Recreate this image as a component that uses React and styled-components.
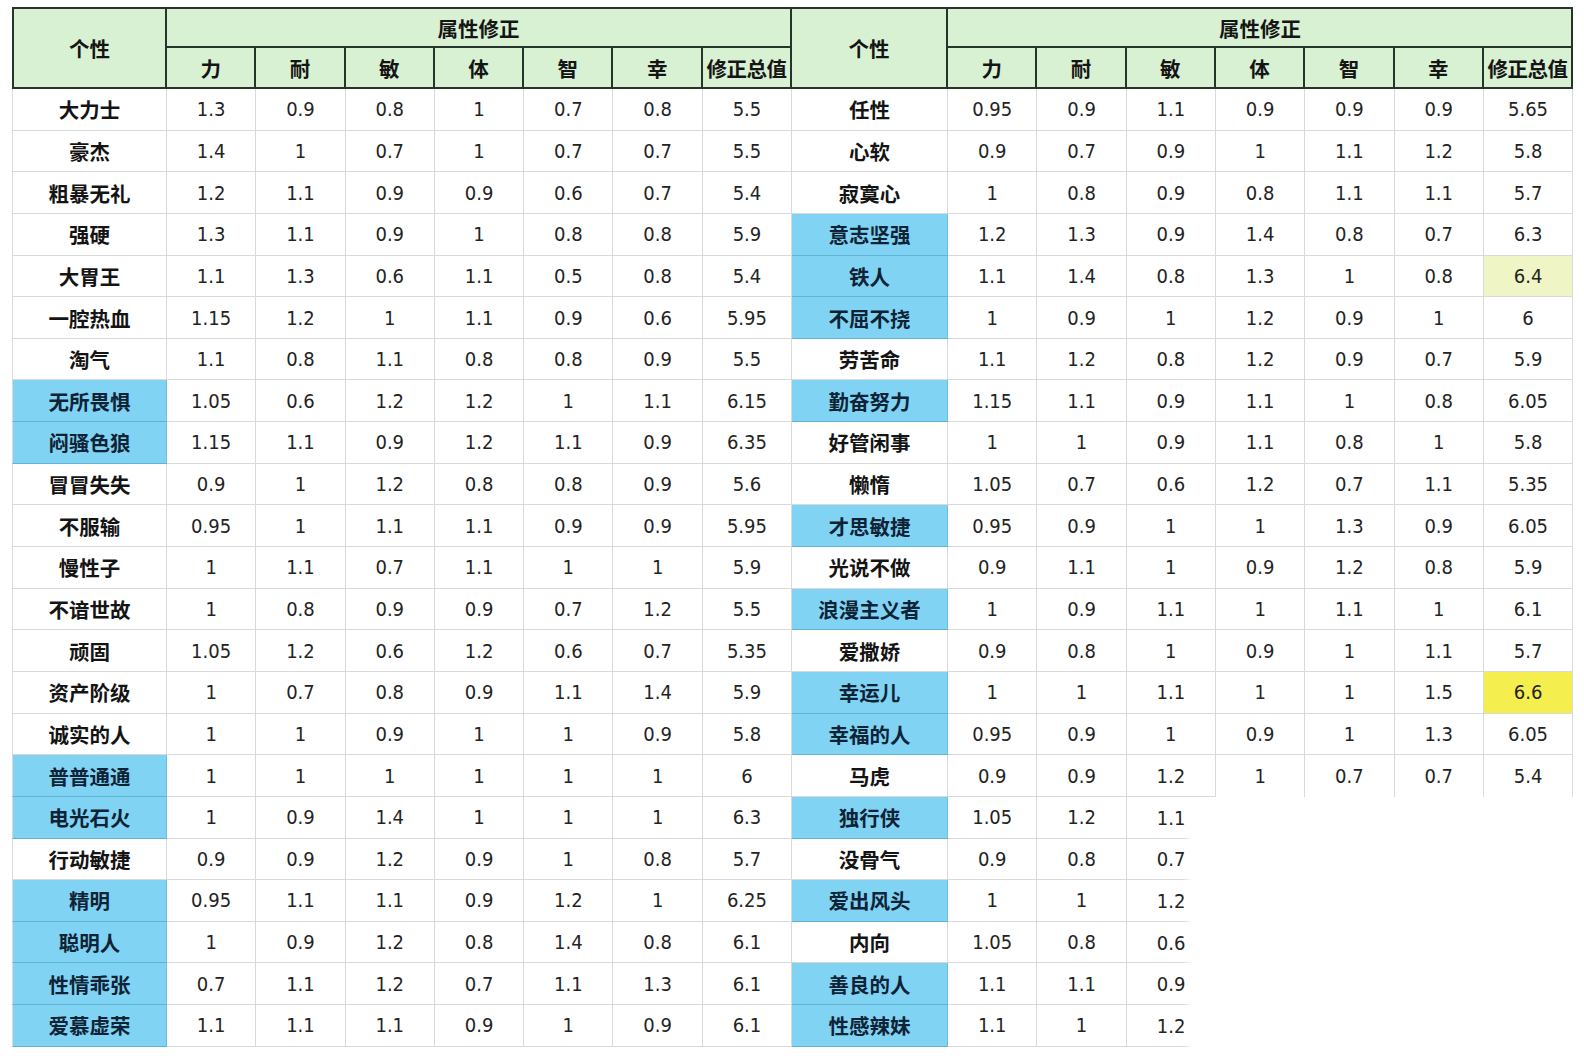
import React from "react";
import styled, { createGlobalStyle, css } from "styled-components";

const Global = createGlobalStyle`
  html, body { margin: 0; padding: 0; background: #ffffff; }
  body { font-family: "Noto Sans CJK SC", "Noto Sans", sans-serif; }
`;

const Page = styled.div`
  padding: 7px 0 0 12px;
  width: 1584px;
  height: 1063px;
  box-sizing: border-box;
  background: #fff;
`;

const Table = styled.table`
  border-collapse: separate;
  border-spacing: 0;
  table-layout: fixed;
  width: 1561px;
`;

const HEAD_LINE = "#26352a";
const GRID = "#d9d9dc";

const HeadRow = styled.tr`
  height: ${(p) => p.$h}px;
`;

const HeadCell = styled.th`
  box-sizing: border-box;
  padding: 0;
  background: #d9f1d3;
  color: #151515;
  font-family: "Noto Sans CJK SC", sans-serif;
  font-weight: 700;
  font-size: 20.5px;
  text-align: ${(p) => (p.$left ? "left" : "center")};
  padding-left: ${(p) => (p.$left ? "271px" : "0")};
  white-space: nowrap;
  letter-spacing: ${(p) => (p.$tight ? "-0.5px" : "0")};
  border-right: 2px solid ${HEAD_LINE};
  border-bottom: 2px solid ${HEAD_LINE};
  ${(p) => p.$top && css`border-top: 2px solid ${HEAD_LINE};`}
  ${(p) => p.$first && css`border-left: 2px solid ${HEAD_LINE};`}
`;

const Row = styled.tr`
  height: 41.65px;
`;

const NameCell = styled.td`
  box-sizing: border-box;
  padding: 0;
  text-align: center;
  font-family: "Noto Sans CJK SC", sans-serif;
  font-weight: 700;
  font-size: 20.5px;
  color: ${(p) => (p.$blue ? "#0f2336" : "#141414")};
  background: ${(p) => (p.$blue ? "#80d3f3" : "#ffffff")};
  border-right: 1px solid ${(p) => (p.$blue ? "#69bfe0" : GRID)};
  border-bottom: 1px solid ${(p) => (p.$blue ? "#5fb4d6" : GRID)};
  ${(p) => p.$first && css`border-left: 1px solid ${GRID};`}
  white-space: nowrap;
`;

const fills = {
  none: "#ffffff",
  pale: "#eff5c4",
  bright: "#f4ef4e",
};

const NumCell = styled.td`
  box-sizing: border-box;
  padding: 0;
  text-align: center;
  font-family: "DejaVu Sans Condensed", "DejaVu Sans", sans-serif;
  font-stretch: semi-condensed;
  font-size: 20px;
  color: #232323;
  background: ${(p) => fills[p.$fill || "none"]};
  border-right: 1px solid ${GRID};
  border-bottom: ${(p) => (p.$openBottom ? "none" : `1px solid ${GRID}`)};
`;

const CutCell = styled.td`
  box-sizing: border-box;
  padding: 0;
  overflow: hidden;
  background-image: linear-gradient(90deg, ${GRID} 0, ${GRID} 56px, rgba(255,255,255,0) 66px);
  background-repeat: no-repeat;
  background-position: left bottom;
  background-size: 100% 1px;
`;

const CutInner = styled.div`
  width: 61px;
  overflow: hidden;
`;

const CutText = styled.div`
  width: 89px;
  text-align: center;
  font-family: "DejaVu Sans Condensed", "DejaVu Sans", sans-serif;
  font-stretch: semi-condensed;
  font-size: 20px;
  color: #232323;
`;

const BlankCell = styled.td`
  padding: 0;
  background: #fff;
`;

const L = (name, blue, vals, fill) => ({ name, blue, vals, fill });

const left = [
  L("大力士", 0, ["1.3", "0.9", "0.8", "1", "0.7", "0.8", "5.5"]),
  L("豪杰", 0, ["1.4", "1", "0.7", "1", "0.7", "0.7", "5.5"]),
  L("粗暴无礼", 0, ["1.2", "1.1", "0.9", "0.9", "0.6", "0.7", "5.4"]),
  L("强硬", 0, ["1.3", "1.1", "0.9", "1", "0.8", "0.8", "5.9"]),
  L("大胃王", 0, ["1.1", "1.3", "0.6", "1.1", "0.5", "0.8", "5.4"]),
  L("一腔热血", 0, ["1.15", "1.2", "1", "1.1", "0.9", "0.6", "5.95"]),
  L("淘气", 0, ["1.1", "0.8", "1.1", "0.8", "0.8", "0.9", "5.5"]),
  L("无所畏惧", 1, ["1.05", "0.6", "1.2", "1.2", "1", "1.1", "6.15"]),
  L("闷骚色狼", 1, ["1.15", "1.1", "0.9", "1.2", "1.1", "0.9", "6.35"]),
  L("冒冒失失", 0, ["0.9", "1", "1.2", "0.8", "0.8", "0.9", "5.6"]),
  L("不服输", 0, ["0.95", "1", "1.1", "1.1", "0.9", "0.9", "5.95"]),
  L("慢性子", 0, ["1", "1.1", "0.7", "1.1", "1", "1", "5.9"]),
  L("不谙世故", 0, ["1", "0.8", "0.9", "0.9", "0.7", "1.2", "5.5"]),
  L("顽固", 0, ["1.05", "1.2", "0.6", "1.2", "0.6", "0.7", "5.35"]),
  L("资产阶级", 0, ["1", "0.7", "0.8", "0.9", "1.1", "1.4", "5.9"]),
  L("诚实的人", 0, ["1", "1", "0.9", "1", "1", "0.9", "5.8"]),
  L("普普通通", 1, ["1", "1", "1", "1", "1", "1", "6"]),
  L("电光石火", 1, ["1", "0.9", "1.4", "1", "1", "1", "6.3"]),
  L("行动敏捷", 0, ["0.9", "0.9", "1.2", "0.9", "1", "0.8", "5.7"]),
  L("精明", 1, ["0.95", "1.1", "1.1", "0.9", "1.2", "1", "6.25"]),
  L("聪明人", 1, ["1", "0.9", "1.2", "0.8", "1.4", "0.8", "6.1"]),
  L("性情乖张", 1, ["0.7", "1.1", "1.2", "0.7", "1.1", "1.3", "6.1"]),
  L("爱慕虚荣", 1, ["1.1", "1.1", "1.1", "0.9", "1", "0.9", "6.1"]),
];

const right = [
  L("任性", 0, ["0.95", "0.9", "1.1", "0.9", "0.9", "0.9", "5.65"]),
  L("心软", 0, ["0.9", "0.7", "0.9", "1", "1.1", "1.2", "5.8"]),
  L("寂寞心", 0, ["1", "0.8", "0.9", "0.8", "1.1", "1.1", "5.7"]),
  L("意志坚强", 1, ["1.2", "1.3", "0.9", "1.4", "0.8", "0.7", "6.3"]),
  L("铁人", 1, ["1.1", "1.4", "0.8", "1.3", "1", "0.8", "6.4"], "pale"),
  L("不屈不挠", 1, ["1", "0.9", "1", "1.2", "0.9", "1", "6"]),
  L("劳苦命", 0, ["1.1", "1.2", "0.8", "1.2", "0.9", "0.7", "5.9"]),
  L("勤奋努力", 1, ["1.15", "1.1", "0.9", "1.1", "1", "0.8", "6.05"]),
  L("好管闲事", 0, ["1", "1", "0.9", "1.1", "0.8", "1", "5.8"]),
  L("懒惰", 0, ["1.05", "0.7", "0.6", "1.2", "0.7", "1.1", "5.35"]),
  L("才思敏捷", 1, ["0.95", "0.9", "1", "1", "1.3", "0.9", "6.05"]),
  L("光说不做", 0, ["0.9", "1.1", "1", "0.9", "1.2", "0.8", "5.9"]),
  L("浪漫主义者", 1, ["1", "0.9", "1.1", "1", "1.1", "1", "6.1"]),
  L("爱撒娇", 0, ["0.9", "0.8", "1", "0.9", "1", "1.1", "5.7"]),
  L("幸运儿", 1, ["1", "1", "1.1", "1", "1", "1.5", "6.6"], "bright"),
  L("幸福的人", 1, ["0.95", "0.9", "1", "0.9", "1", "1.3", "6.05"]),
  L("马虎", 0, ["0.9", "0.9", "1.2", "1", "0.7", "0.7", "5.4"], "none"),
  L("独行侠", 1, ["1.05", "1.2", "1.1"]),
  L("没骨气", 0, ["0.9", "0.8", "0.7"]),
  L("爱出风头", 1, ["1", "1", "1.2"]),
  L("内向", 0, ["1.05", "0.8", "0.6"]),
  L("善良的人", 1, ["1.1", "1.1", "0.9"]),
  L("性感辣妹", 1, ["1.1", "1", "1.2"]),
];
right[16].open = true;

const stats = ["力", "耐", "敏", "体", "智", "幸", "修正总值"];

function Half({ item, first }) {
  if (!item) return null;
  const short = item.vals.length < 7;
  return (
    <>
      <NameCell $blue={item.blue} $first={first}>
        {item.name}
      </NameCell>
      {short ? (
        <>
          <NumCell>{item.vals[0]}</NumCell>
          <NumCell>{item.vals[1]}</NumCell>
          <CutCell>
            <CutInner>
              <CutText>{item.vals[2]}</CutText>
            </CutInner>
          </CutCell>
          {[0, 1, 2, 3].map((i) => (
            <BlankCell key={i} />
          ))}
        </>
      ) : (
        item.vals.map((v, i) => (
          <NumCell
            key={i}
            $fill={i === 6 ? item.fill : "none"}
            $openBottom={item.open && i >= 3}
          >
            {v}
          </NumCell>
        ))
      )}
    </>
  );
}

export default function App() {
  const cols = [];
  for (let h = 0; h < 2; h++) {
    cols.push(<col key={`n${h}`} style={{ width: h === 0 ? 155 : 156 }} />);
    for (let i = 0; i < 7; i++) cols.push(<col key={`c${h}${i}`} style={{ width: 89.3 }} />);
  }
  return (
    <Page>
      <Global />
      <Table>
        <colgroup>{cols}</colgroup>
        <thead>
          <HeadRow $h={41}>
            <HeadCell rowSpan={2} $top $first>
              个性
            </HeadCell>
            <HeadCell colSpan={7} $top>
              属性修正
            </HeadCell>
            <HeadCell rowSpan={2} $top>
              个性
            </HeadCell>
            <HeadCell colSpan={7} $top $left>
              属性修正
            </HeadCell>
          </HeadRow>
          <HeadRow $h={41}>
            {stats.map((s) => (
              <HeadCell key={`a${s}`} $tight={s.length > 1}>
                {s}
              </HeadCell>
            ))}
            {stats.map((s) => (
              <HeadCell key={`b${s}`} $tight={s.length > 1}>
                {s}
              </HeadCell>
            ))}
          </HeadRow>
        </thead>
        <tbody>
          {left.map((item, r) => (
            <Row key={r}>
              <Half item={item} first />
              <Half item={right[r]} />
            </Row>
          ))}
        </tbody>
      </Table>
    </Page>
  );
}
